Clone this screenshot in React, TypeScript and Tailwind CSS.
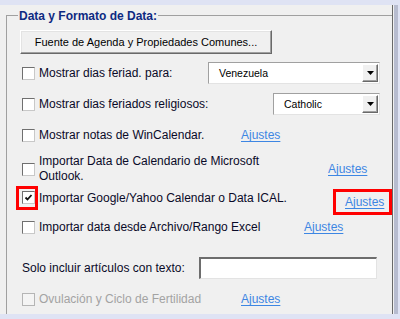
import React from "react";

const font = "font-['Liberation_Sans',Arial,sans-serif]";

function Checkbox({ checked = false, disabled = false }: { checked?: boolean; disabled?: boolean }) {
  return (
    <span
      className={`flex h-[13px] w-[13px] shrink-0 items-center justify-center border ${
        disabled
          ? "border-[#b5b5b5] bg-[#f4f4f4]"
          : "border-b-[#c8c8c8] border-l-[#6f6f6f] border-r-[#c8c8c8] border-t-[#6f6f6f] bg-white"
      }`}
    >
      {checked && (
        <svg width="9" height="9" viewBox="0 0 9 9">
          <path d="M1.5 4.5 L3.5 6.5 L7.5 2" fill="none" stroke="#111" strokeWidth="1.8" />
        </svg>
      )}
    </span>
  );
}

function Ajustes() {
  return <span className="text-[12px] leading-[14px] text-[#3d86e3] underline underline-offset-[2px]">Ajustes</span>;
}

function Select({ value, width }: { value: string; width: string }) {
  return (
    <div
      className={`flex h-[22px] ${width} items-center border border-t-[#a0a0a0] border-l-[#a0a0a0] border-r-[#e3e3e3] border-b-[#e3e3e3] bg-white`}
    >
      <span className="flex-1 pl-[10px] text-[10.5px] leading-[14px] text-black">{value}</span>
      <span className="mr-[1px] flex h-[18px] w-[16px] items-center justify-center border border-t-white border-l-white border-r-[#696969] border-b-[#696969] bg-[#f0f0f0] shadow-[inset_-1px_-1px_0_#a0a0a0]">
        <svg width="7" height="4" viewBox="0 0 7 4">
          <path d="M0 0 H7 L3.5 4 Z" fill="#000" />
        </svg>
      </span>
    </div>
  );
}

export default function App() {
  return (
    <div className={`flex h-[319px] w-[400px] flex-col bg-[#dfe3f4] ${font}`}>
      <div className="h-[5px]" />
      <div className="flex h-[309px]">
        <div className="w-[393px] border-r border-[#696969] bg-[#f0f0f0] text-[12px] leading-[14px] text-[#0a0a28]">
          <div className="ml-[6px] mt-[10px] h-[299px] border-l border-t border-[#a0a0a0] pl-[13px]">
            <div className="-mt-[7px] flex">
              <span className="ml-[-2px] bg-[#f0f0f0] px-[1px] font-bold text-[#0e2a82]">Data y Formato de Data:</span>
            </div>

            <button className="mt-[7px] flex h-[24px] w-[252px] items-center justify-center border border-t-white border-l-white border-r-[#696969] border-b-[#696969] bg-[#f0f0f0] text-[11px] text-black shadow-[inset_-1px_-1px_0_#a0a0a0,inset_1px_1px_0_#e3e3e3]">
              Fuente de Agenda y Propiedades Comunes...
            </button>

            <div className="mt-[8px] flex h-[22px] items-center pl-[2px]">
              <Checkbox />
              <span className="ml-[4px] w-[169px]">Mostrar dias feriad. para:</span>
              <Select value="Venezuela" width="w-[172px]" />
            </div>

            <div className="mt-[9px] flex h-[22px] items-center pl-[2px]">
              <Checkbox />
              <span className="ml-[4px] w-[234px]">Mostrar dias feriados religiosos:</span>
              <Select value="Catholic" width="w-[107px]" />
            </div>

            <div className="mt-[9px] flex h-[22px] items-center pl-[2px]">
              <Checkbox />
              <span className="ml-[4px] w-[202px]">Mostrar notas de WinCalendar.</span>
              <Ajustes />
            </div>

            <div className="mt-[8px] flex h-[30px] items-center pl-[2px]">
              <Checkbox />
              <span className="ml-[4px] w-[289px] leading-[15px]">
                Importar Data de Calendario de Microsoft
                <br />
                Outlook.
              </span>
              <Ajustes />
            </div>

            <div className="mt-[2px] flex items-start pl-[2px]">
              <span className="-ml-[6px] border-[3px] border-[#ff0000] pb-[3px] pl-[3px] pt-[2px]">
                <Checkbox checked />
              </span>
              <span className="ml-[1px] mt-[5px] w-[294px]">Importar Google/Yahoo Calendar o Data ICAL.</span>
              <span className="mt-[3px] flex h-[26px] w-[59px] items-center border-[3px] border-[#ff0000] pl-[9px]">
                <Ajustes />
              </span>
            </div>

            <div className="mt-[1px] flex h-[22px] items-center pl-[2px]">
              <Checkbox />
              <span className="ml-[4px] w-[265px]">Importar data desde Archivo/Rango Excel</span>
              <Ajustes />
            </div>

            <div className="mt-[19px] flex h-[22px] items-center pl-[2px]">
              <span className="w-[177px]">Solo incluir artículos con texto:</span>
              <div className="h-[22px] w-[178px] border-b border-l-2 border-r border-t-2 border-b-[#e3e3e3] border-l-[#6d6d6d] border-r-[#e3e3e3] border-t-[#6d6d6d] bg-white" />
            </div>

            <div className="mt-[9px] flex h-[22px] items-center pl-[2px]">
              <Checkbox disabled />
              <span className="ml-[4px] w-[202px] text-[#a3a3a3]">Ovulación y Ciclo de Fertilidad</span>
              <Ajustes />
            </div>
          </div>
        </div>
        <div className="w-[1px] bg-[#f0f0f0]" />
        <div className="w-[4px] bg-[#b7bccf]" />
      </div>
    </div>
  );
}
